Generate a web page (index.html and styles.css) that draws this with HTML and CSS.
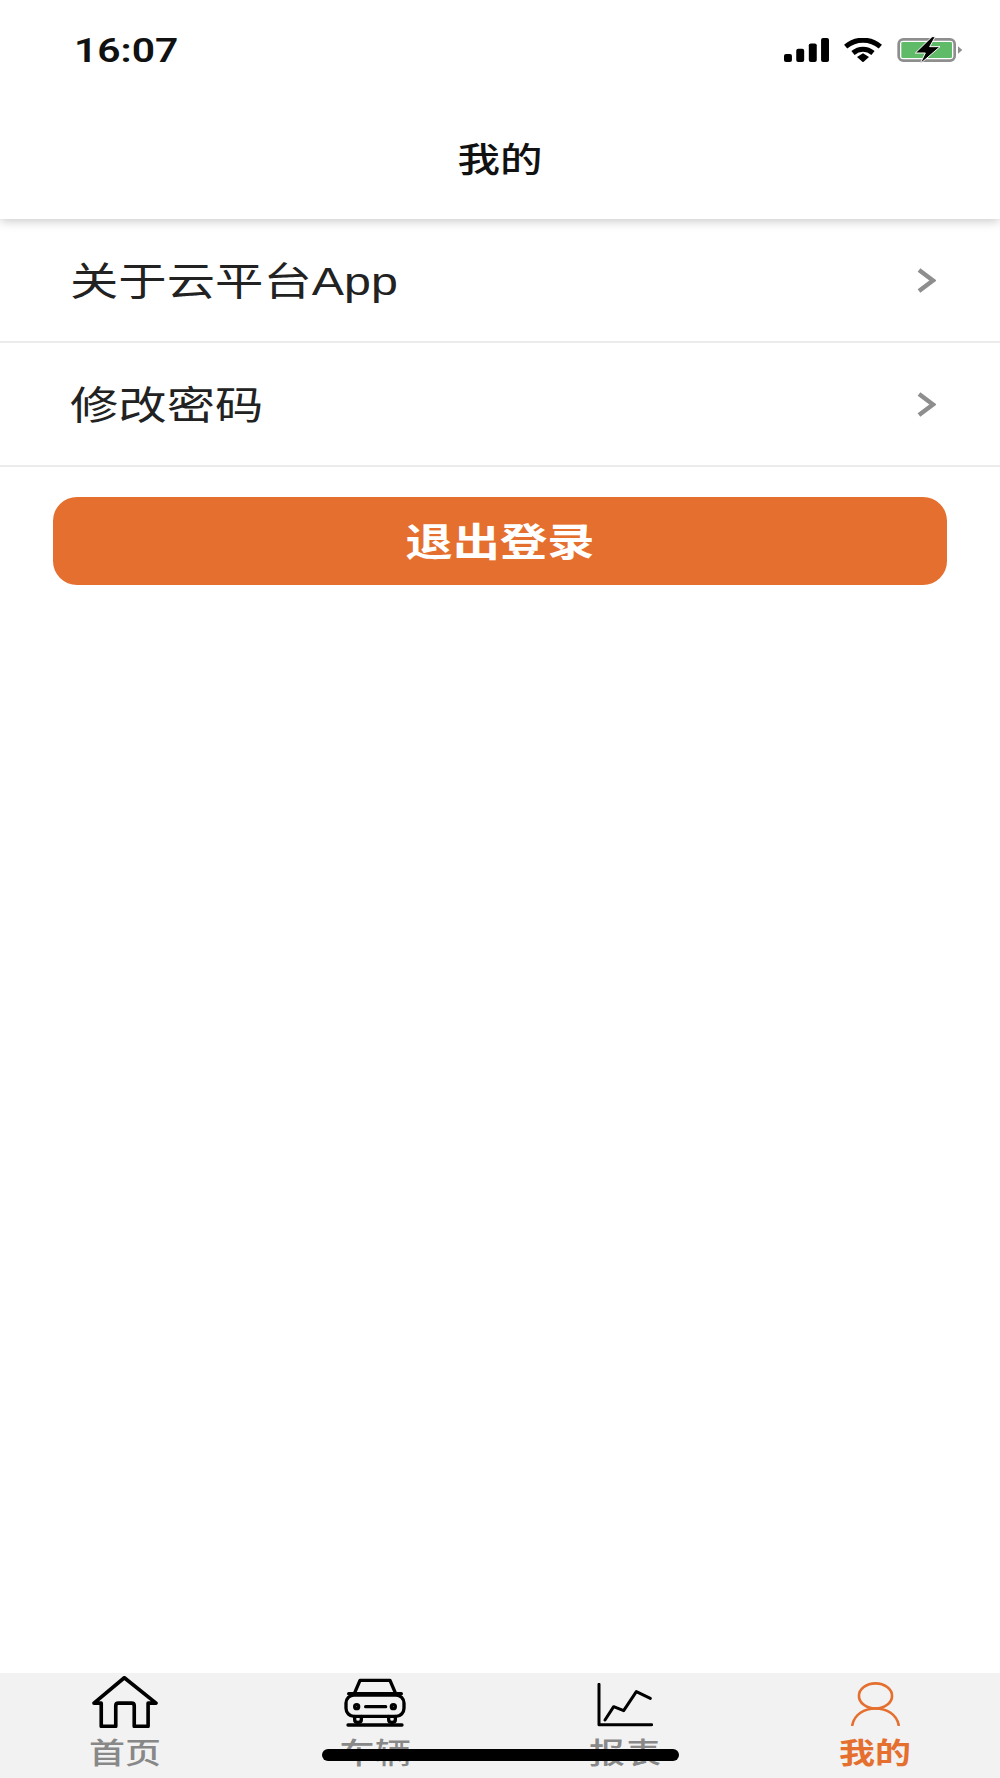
FILE: index.html
```html
<!DOCTYPE html>
<html lang="zh-CN">
<head>
  <meta charset="UTF-8" />
  <meta name="viewport" content="width=device-width, initial-scale=1.0" />
  <title>我的</title>
  <link rel="stylesheet" href="styles.css">
</head>
<body>
  <div class="page">
    <header class="top">
      <div class="status">
        <span class="time">16:07</span>
        <div class="status-icons">
          <svg class="icon-signal" viewBox="0 0 136 72">
            <rect x="0" y="48" width="24" height="24" rx="6" />
            <rect x="37" y="32" width="24" height="40" rx="6" />
            <rect x="75" y="16" width="24" height="56" rx="6" />
            <rect x="112" y="0" width="24" height="72" rx="6" />
          </svg>
          <svg class="icon-wifi" viewBox="0 0 118 72">
            <path class="wifi-arc" d="M7 26 C38 0 80 0 111 26" />
            <path class="wifi-arc" d="M29 45 C47 30 71 30 89 45" />
            <path d="M41 57 L59 46 L77 57 L59 73 Z" />
          </svg>
          <svg class="icon-battery" viewBox="0 -6 196 84">
            <rect class="batt-shell" x="4" y="4" width="168" height="64" rx="14" />
            <rect class="batt-level" x="12" y="12" width="152" height="48" rx="4" />
            <path class="batt-tip" d="M182 25 L195 36 L182 47 Z" />
            <path class="batt-bolt" d="M104 -4 L54 45 L84 45 L68 78 L128 26 L97 26 L114 -4 Z" />
          </svg>
        </div>
      </div>
      <h1 class="title"><span class="title-text">我的</span></h1>
    </header>

    <main class="content">
      <div class="row">
        <span class="row-label">关于云平台App</span>
        <svg class="chevron" viewBox="0 0 20 25"><path d="M3 2 L17 12.5 L3 23" /></svg>
      </div>
      <div class="row">
        <span class="row-label">修改密码</span>
        <svg class="chevron" viewBox="0 0 20 25"><path d="M3 2 L17 12.5 L3 23" /></svg>
      </div>
      <button class="logout"><span class="logout-text">退出登录</span></button>
    </main>

    <nav class="tabs">
      <div class="tab">
        <svg class="tab-icon icon-home" viewBox="0 0 200 157">
          <path d="M28 152 V82 H6 L98 5 L194 82 H170 V152 H128 V90 Q128 82 120 82 H80 Q72 82 72 90 V152 Z" />
        </svg>
        <span class="tab-label">首页</span>
      </div>
      <div class="tab">
        <svg class="tab-icon icon-car" viewBox="0 0 186 145">
          <path d="M30 48 L48 6 H138 L156 48" />
          <path d="M14 46 H172" />
          <rect x="6" y="50" width="174" height="64" rx="24" />
          <circle cx="38" cy="85" r="6" />
          <circle cx="148" cy="85" r="6" />
          <path d="M65 85 H125" />
          <path d="M32 114 V124 Q32 132 42 132 Q52 132 52 124 V114" />
          <path d="M134 114 V124 Q134 132 144 132 Q154 132 154 124 V114" />
          <path d="M12 140 H174" />
        </svg>
        <span class="tab-label">车辆</span>
      </div>
      <div class="tab">
        <svg class="tab-icon icon-chart" viewBox="0 0 168 130">
          <path d="M6 3 V124 H164" />
          <path d="M24 110 L50 70 L80 82 L118 25 L160 45" />
        </svg>
        <span class="tab-label">报表</span>
      </div>
      <div class="tab active">
        <svg class="tab-icon icon-user" viewBox="0 0 148 133">
          <ellipse cx="74" cy="42" rx="50" ry="38" />
          <path d="M4 130 C10 98 40 80 74 80 C108 80 138 98 144 130" />
        </svg>
        <span class="tab-label">我的</span>
      </div>
      <div class="home-bar"></div>
    </nav>
  </div>
</body>
</html>
```

FILE: styles.css
```css
* {
  box-sizing: border-box;
}
body {
  margin: 0;
  background: #fff;
  font-family: "Liberation Sans", "Noto Sans CJK SC", sans-serif;
}
.page {
  width: 1000px;
  height: 1778px;
  display: flex;
  flex-direction: column;
  overflow: hidden;
}

/* status bar + title */
.top {
  height: 219px;
  background: #fff;
  box-shadow: 0 2px 10px rgba(0, 0, 0, 0.22);
  position: relative;
  z-index: 1;
  flex-shrink: 0;
}
.status {
  height: 100px;
  padding: 0 37px 0 74px;
  display: flex;
  justify-content: space-between;
  align-items: center;
}
.time {
  font-family: Roboto, "Liberation Sans", sans-serif;
  font-size: 34px;
  font-weight: 600;
  color: #111;
  display: inline-block;
  transform: scaleX(1.2);
  transform-origin: left center;
}
.status-icons {
  display: flex;
  align-items: center;
  gap: 14px;
}
.icon-signal {
  width: 45px;
  height: 24px;
  fill: #000;
}
.icon-wifi {
  width: 40px;
  height: 24px;
  fill: #000;
}
.wifi-arc {
  fill: none;
  stroke: #000;
  stroke-width: 15;
}
.icon-battery {
  width: 66px;
  height: 28px;
}
.batt-shell {
  fill: #fff;
  stroke: #8e8e8e;
  stroke-width: 8;
}
.batt-level {
  fill: #5fbb68;
}
.batt-tip {
  fill: #8e8e8e;
}
.batt-bolt {
  fill: #000;
  stroke: #fff;
  stroke-width: 3;
}
.title {
  margin: 0;
  height: 116px;
  line-height: 120px;
  text-align: center;
  font-size: 34px;
  font-weight: 500;
  color: #111;
}
.title-text {
  display: inline-block;
  transform: scaleX(1.25);
}

/* list */
.content {
  flex: 1;
}
.row {
  height: 124px;
  padding: 0 64px 0 70px;
  border-bottom: 2px solid #ececec;
  display: flex;
  justify-content: space-between;
  align-items: center;
}
.row-label {
  font-size: 39px;
  line-height: 54px;
  margin-top: 4px;
  color: #222;
  display: inline-block;
  transform: scaleX(1.24);
  transform-origin: left center;
}
.chevron {
  width: 20px;
  height: 25px;
  fill: none;
  stroke: #8e8e8e;
  stroke-width: 4.5;
}
.logout {
  display: block;
  width: 894px;
  height: 88px;
  margin: 30px 0 0 53px;
  padding: 0 0 4px;
  border: none;
  border-radius: 24px;
  background: #e56f2e;
  color: #fff;
  font-family: inherit;
  font-size: 39px;
  font-weight: 700;
}
.logout-text {
  display: inline-block;
  transform: scaleX(1.21);
}

/* bottom tabs */
.tabs {
  height: 105px;
  background: #f2f2f2;
  display: flex;
  position: relative;
  flex-shrink: 0;
}
.tab {
  width: 250px;
  height: 105px;
  display: flex;
  flex-direction: column;
  align-items: center;
}
.tab-icon {
  height: 52px;
  flex-shrink: 0;
  fill: none;
  stroke: #000;
  stroke-linejoin: round;
  stroke-linecap: round;
}
.icon-home {
  width: 66px;
  margin-top: 3px;
  stroke-width: 11;
}
.icon-car {
  width: 62px;
  height: 49px;
  margin-top: 5px;
  margin-bottom: 1px;
  stroke-width: 10;
}
.icon-chart {
  width: 56px;
  height: 44px;
  margin-top: 10px;
  margin-bottom: 1px;
  stroke-width: 9;
}
.icon-user {
  width: 49px;
  height: 44px;
  margin-top: 9px;
  margin-bottom: 2px;
  stroke: #e56f2e;
  stroke-width: 8;
}
.tab-label {
  margin-top: 8px;
  font-size: 29px;
  font-weight: 500;
  line-height: 36px;
  color: #888;
  display: inline-block;
  transform: scaleX(1.24);
}
.tab.active .tab-label {
  color: #e56f2e;
  font-weight: 700;
}
.home-bar {
  position: absolute;
  left: 322px;
  top: 76px;
  width: 357px;
  height: 12px;
  border-radius: 6px;
  background: #000;
}
```
